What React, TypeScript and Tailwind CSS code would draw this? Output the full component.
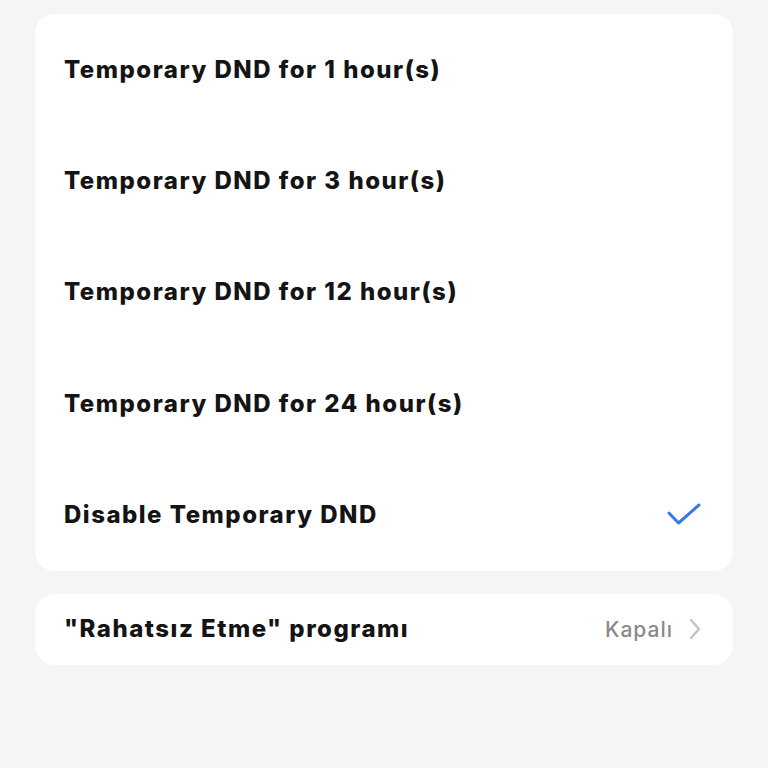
import React from 'react';

const options = [
  'Temporary DND for 1 hour(s)',
  'Temporary DND for 3 hour(s)',
  'Temporary DND for 12 hour(s)',
  'Temporary DND for 24 hour(s)',
  'Disable Temporary DND',
];

const App: React.FC = () => {
  const selected = 4;

  return (
    <div className="min-h-[768px] bg-[#f5f5f5] px-[35px] pt-[14px]" style={{ fontFamily: 'Inter, "Noto Sans", sans-serif' }}>
      <div className="bg-white rounded-[20px] overflow-hidden">
        {options.map((label, i) => (
          <div key={label} className="h-[111.4px] flex items-center justify-between pl-[29px] pr-[32px]">
            <span className="text-[24px] font-extrabold text-[#141414] tracking-[1.5px]">{label}</span>
            {i === selected && (
              <svg width="34" height="24" viewBox="0 0 34 24" fill="none">
                <path d="M2 10 L11.5 20 L32 2" stroke="#3a78e8" strokeWidth="3" strokeLinecap="round" strokeLinejoin="round" />
              </svg>
            )}
          </div>
        ))}
      </div>

      <div className="mt-[23px] bg-white rounded-[20px] h-[71px] flex items-center justify-between pl-[29px] pr-[32px]">
        <span className="text-[24px] font-extrabold text-[#141414] tracking-[1.5px]">"Rahatsız Etme" programı</span>
        <div className="flex items-center gap-[16px]">
          <span className="text-[21px] text-[#8a8a8a] font-medium tracking-[1px]">Kapalı</span>
          <svg width="12" height="22" viewBox="0 0 12 22" fill="none">
            <path d="M2 2 L10 11 L2 20" stroke="#c4c4c4" strokeWidth="2.5" strokeLinecap="round" strokeLinejoin="round" />
          </svg>
        </div>
      </div>
    </div>
  );
};

export default App;
